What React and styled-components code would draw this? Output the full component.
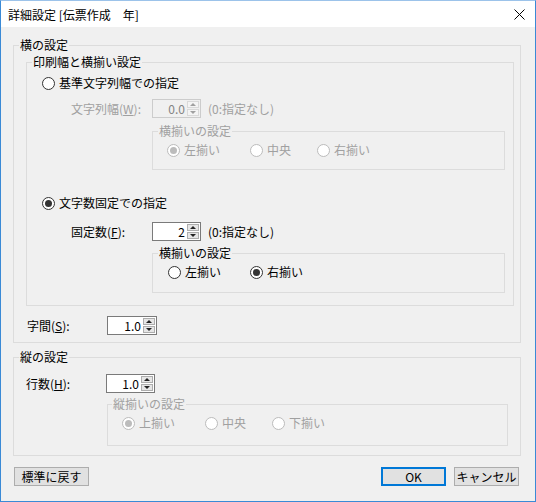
import styled, { createGlobalStyle, css } from "styled-components";

const GlobalStyles = createGlobalStyle`
  html, body {
    margin: 0;
    padding: 0;
    background: #f0f0f0;
  }
  body {
    font-family: "Noto Sans CJK JP", "Liberation Sans", sans-serif;
    font-size: 12px;
    color: #000;
  }
  *, *:before, *:after {
    box-sizing: border-box;
  }
`;

const Window = styled.div`
  width: 536px;
  height: 502px;
  border: 1px solid #3a8ad6;
  border-top-color: #9cc3ea;
  background: #f0f0f0;
  display: flex;
  flex-direction: column;
`;

const TitleBar = styled.div`
  height: 26px;
  flex: none;
  background: #fff;
  display: flex;
  align-items: center;
  justify-content: space-between;
  padding: 0 10px 0 7px;
  font-size: 12px;
`;

const CloseIcon = () => (
  <svg width="11" height="11" viewBox="0 0 11 11">
    <path d="M0.5 0.5 L10.5 10.5 M10.5 0.5 L0.5 10.5" stroke="#000" strokeWidth="1" />
  </svg>
);

const Group = styled.fieldset`
  border: 1px solid #dcdcdc;
  margin: ${({ $mt = 0 }) => $mt}px 0 0 ${({ $ml = 0 }) => $ml}px;
  padding: 0 0 ${({ $pb = 0 }) => $pb}px 0;
  min-width: 0;
  width: ${({ $w }) => $w}px;
  display: flex;
  flex-direction: column;
`;

const Legend = styled.legend`
  padding: 0 1px;
  margin-left: ${({ $ml = 5 }) => $ml}px;
  line-height: 14px;
  color: ${({ $disabled }) => ($disabled ? "#a0a0a0" : "#000")};
`;

const Row = styled.div`
  display: flex;
  align-items: center;
  height: ${({ $h = 16 }) => $h}px;
  margin-top: ${({ $mt = 0 }) => $mt}px;
  padding-left: ${({ $pl = 0 }) => $pl}px;
  color: ${({ $disabled }) => ($disabled ? "#a0a0a0" : "#000")};
`;

const FieldLabel = styled.span`
  width: ${({ $w }) => $w}px;
  flex: none;
  line-height: 16px;
`;

const Hint = styled.span`
  margin-left: 7px;
  line-height: 16px;
`;

const RadioItem = styled.label`
  display: flex;
  align-items: center;
  gap: 4px;
  width: ${({ $w }) => ($w ? `${$w}px` : "auto")};
  flex: none;
  line-height: 16px;
  color: ${({ $disabled }) => ($disabled ? "#a0a0a0" : "#000")};
`;

const RadioCircle = styled.span`
  width: 13px;
  height: 13px;
  border-radius: 50%;
  flex: none;
  display: flex;
  align-items: center;
  justify-content: center;
  background: #fff;
  border: 1px solid ${({ $disabled }) => ($disabled ? "#bcbcbc" : "#333")};
  ${({ $checked, $disabled }) =>
    $checked &&
    css`
      &::after {
        content: "";
        width: 7px;
        height: 7px;
        border-radius: 50%;
        background: ${$disabled ? "#bcbcbc" : "#333"};
      }
    `}
`;

const Radio = ({ checked, disabled, width, children }) => (
  <RadioItem $disabled={disabled} $w={width}>
    <RadioCircle $checked={checked} $disabled={disabled} />
    {children}
  </RadioItem>
);

const SpinBox = styled.div`
  width: ${({ $w = 49 }) => $w}px;
  height: 19px;
  flex: none;
  display: flex;
  border: 1px solid ${({ $disabled }) => ($disabled ? "#cccccc" : "#7a7a7a")};
  background: ${({ $disabled }) => ($disabled ? "#f0f0f0" : "#fff")};
  color: ${({ $disabled }) => ($disabled ? "#838383" : "#000")};
`;

const SpinValue = styled.span`
  flex: 1;
  text-align: right;
  padding-right: 2px;
  line-height: 17px;
`;

const SpinButtons = styled.div`
  width: 13px;
  display: flex;
  flex-direction: column;
  padding: 1px 1px 1px 0;
  gap: 1px;
`;

const SpinArrow = styled.span`
  flex: 1;
  display: flex;
  align-items: center;
  justify-content: center;
  background: ${({ $disabled }) => ($disabled ? "#f4f4f4" : "#e6e6e6")};
  border: 1px solid ${({ $disabled }) => ($disabled ? "#d9d9d9" : "#adadad")};
  &::after {
    content: "";
    border-left: 3px solid transparent;
    border-right: 3px solid transparent;
    ${({ $down, $disabled }) =>
      $down
        ? css`border-top: 3px solid ${$disabled ? "#a0a0a0" : "#222"};`
        : css`border-bottom: 3px solid ${$disabled ? "#a0a0a0" : "#222"};`}
  }
`;

const Spinner = ({ value, disabled, width }) => (
  <SpinBox $disabled={disabled} $w={width}>
    <SpinValue>{value}</SpinValue>
    <SpinButtons>
      <SpinArrow $disabled={disabled} />
      <SpinArrow $disabled={disabled} $down />
    </SpinButtons>
  </SpinBox>
);

const Footer = styled.div`
  display: flex;
  align-items: center;
  margin-top: 11px;
  padding: 0 16px 0 13px;
  gap: 8px;
`;

const Button = styled.button`
  width: ${({ $w = 65 }) => $w}px;
  height: 19px;
  padding: 0;
  font: inherit;
  font-size: 12px;
  line-height: 15px;
  color: #000;
  background: #e1e1e1;
  border: 1px solid #adadad;
  ${({ $default }) =>
    $default &&
    css`
      border: 2px solid #0078d7;
      line-height: 13px;
    `}
`;

const Spacer = styled.div`
  flex: 1;
`;

export default function App() {
  return (
    <>
      <GlobalStyles />
      <Window>
        <TitleBar>
          <span>詳細設定 [伝票作成　年]</span>
          <CloseIcon />
        </TitleBar>

        <Group $mt={11} $ml={12} $w={508} $pb={7}>
          <Legend>横の設定</Legend>

          <Group $mt={3} $ml={12} $w={488} $pb={12}>
            <Legend>印刷幅と横揃い設定</Legend>

            <Row $mt={6} $pl={15}>
              <Radio>基準文字列幅での指定</Radio>
            </Row>
            <Row $mt={8} $h={19} $pl={44} $disabled>
              <FieldLabel $w={81}>
                文字列幅(<u>W</u>):
              </FieldLabel>
              <Spinner value="0.0" disabled />
              <Hint>(0:指定なし)</Hint>
            </Row>
            <Group $mt={6} $ml={125} $w={353} $pb={11}>
              <Legend $disabled>横揃いの設定</Legend>
              <Row $mt={4} $pl={14}>
                <Radio checked disabled width={83}>左揃い</Radio>
                <Radio disabled width={67}>中央</Radio>
                <Radio disabled>右揃い</Radio>
              </Row>
            </Group>

            <Row $mt={25} $pl={15}>
              <Radio checked>文字数固定での指定</Radio>
            </Row>
            <Row $mt={11} $h={19} $pl={44}>
              <FieldLabel $w={81}>
                固定数(<u>F</u>):
              </FieldLabel>
              <Spinner value="2" />
              <Hint>(0:指定なし)</Hint>
            </Row>
            <Group $mt={5} $ml={125} $w={353} $pb={12}>
              <Legend>横揃いの設定</Legend>
              <Row $mt={4} $pl={15}>
                <Radio width={82}>左揃い</Radio>
                <Radio checked>右揃い</Radio>
              </Row>
            </Group>
          </Group>

          <Row $mt={10} $h={19} $pl={13}>
            <FieldLabel $w={80}>
              字間(<u>S</u>):
            </FieldLabel>
            <Spinner value="1.0" width={50} />
          </Row>
        </Group>

        <Group $mt={7} $ml={12} $w={508} $pb={9}>
          <Legend>縦の設定</Legend>
          <Row $mt={10} $h={19} $pl={12}>
            <FieldLabel $w={80}>
              行数(<u>H</u>):
            </FieldLabel>
            <Spinner value="1.0" />
          </Row>
          <Group $mt={4} $ml={93} $w={401} $pb={14}>
            <Legend $disabled $ml={4}>縦揃いの設定</Legend>
            <Row $mt={4} $pl={14}>
              <Radio checked disabled width={83}>上揃い</Radio>
              <Radio disabled width={67}>中央</Radio>
              <Radio disabled>下揃い</Radio>
            </Row>
          </Group>
        </Group>

        <Footer>
          <Button $w={75}>標準に戻す</Button>
          <Spacer />
          <Button $default>OK</Button>
          <Button>キャンセル</Button>
        </Footer>
      </Window>
    </>
  );
}
